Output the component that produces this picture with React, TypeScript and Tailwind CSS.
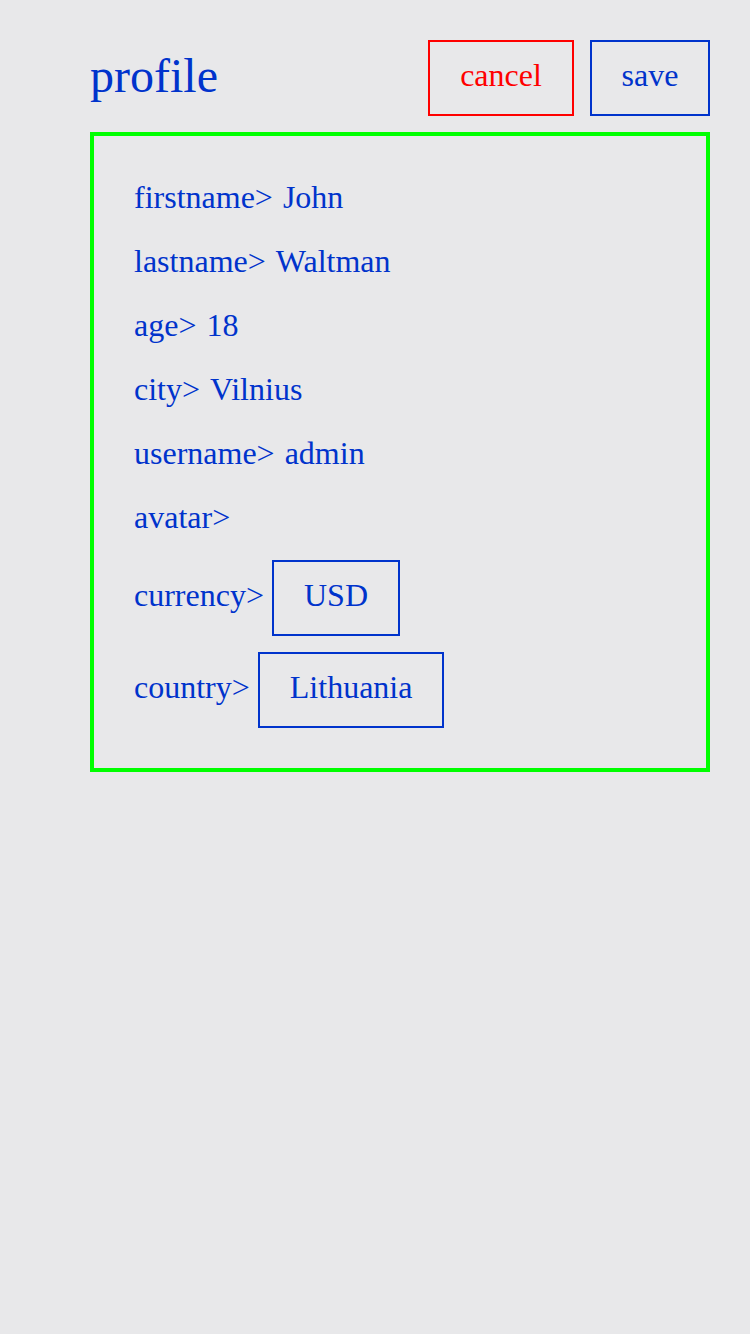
export default function App() {
  const rows = [
    ["firstname", "John"],
    ["lastname", "Waltman"],
    ["age", "18"],
    ["city", "Vilnius"],
    ["username", "admin"],
    ["avatar", ""],
  ];

  return (
    <div
      className="min-h-[1334px] w-[750px] bg-[#e8e8ea] pl-[90px] pr-[40px] pt-[40px] text-[#0033cc]"
      style={{ fontFamily: '"Liberation Serif", "Times New Roman", serif' }}
    >
      <div className="flex items-center justify-between">
        <h1 className="pb-[4px] text-[48px] leading-none">profile</h1>
        <div className="flex gap-4">
          <button className="flex h-[76px] w-[146px] items-center justify-center border-2 border-[#ff0000] pb-[6px] text-[32px] text-[#ff0000]">
            cancel
          </button>
          <button className="flex h-[76px] w-[120px] items-center justify-center border-2 border-[#0033cc] pb-[6px] text-[32px]">
            save
          </button>
        </div>
      </div>

      <div className="mt-4 border-4 border-[#00ff00] px-[40px] pb-[40px] pt-[29px] text-[32px]">
        {rows.map(([label, value]) => (
          <div key={label} className="flex h-16 items-center whitespace-pre">
            {label}&gt; <span className="ml-[2px]">{value}</span>
          </div>
        ))}
        <div className="mt-[11px] flex items-baseline whitespace-pre">
          currency&gt;{" "}
          <span className="flex h-[76px] items-center border-2 border-[#0033cc] px-[30px] pb-[6px]">
            USD
          </span>
        </div>
        <div className="mt-4 flex items-baseline whitespace-pre">
          country&gt;{" "}
          <span className="flex h-[76px] items-center border-2 border-[#0033cc] px-[30px] pb-[6px]">
            Lithuania
          </span>
        </div>
      </div>
    </div>
  );
}
